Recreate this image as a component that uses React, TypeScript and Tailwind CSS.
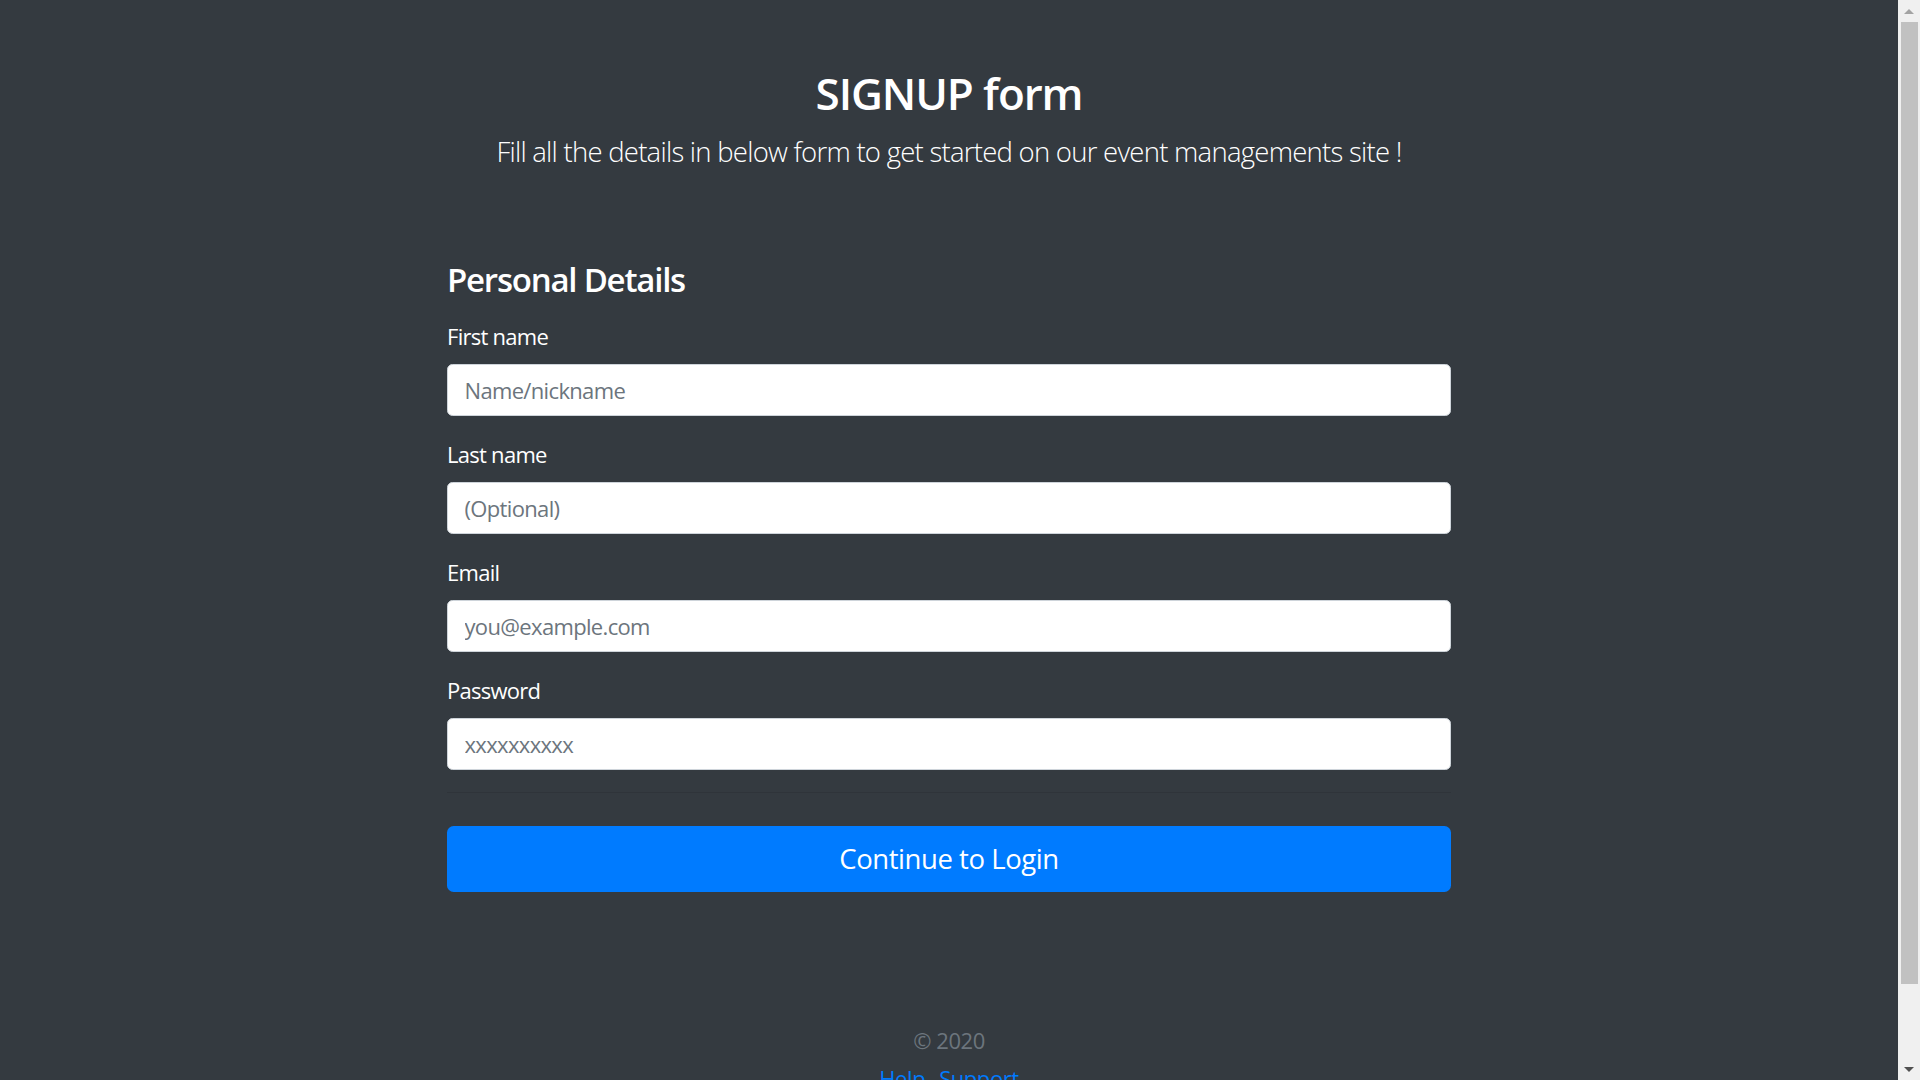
export default function App() {
  const fields = [
    { label: "First name", placeholder: "Name/nickname", type: "text" },
    { label: "Last name", placeholder: "(Optional)", type: "text" },
    { label: "Email", placeholder: "you@example.com", type: "email" },
    { label: "Password", placeholder: "xxxxxxxxxx", type: "password" },
  ];

  return (
    <div className="flex h-[1080px] overflow-hidden bg-[#343a40] font-['Open_Sans',sans-serif] text-white">
      <main className="min-w-0 flex-1">
        <div className="pt-[67px] pb-[66px] text-center">
          <h2 className="mb-[11px] text-[44px] font-semibold leading-[1.2] tracking-[-0.025em]">SIGNUP form</h2>
          <p className="mb-[22px] text-[27.5px] font-light leading-normal tracking-[-0.027em]">
            Fill all the details in below form to get started on our event managements site !
          </p>
        </div>

        <div className="mx-auto w-[1004px]">
          <h4 className="mb-[20px] text-[33px] font-semibold leading-[1.2] tracking-[-0.037em]">Personal Details</h4>
          <form onSubmit={(e) => e.preventDefault()}>
            {fields.map((f) => (
              <div key={f.label} className="mb-[22px]">
                <label className="mb-[11px] inline-block text-[22px] leading-normal tracking-[-0.033em]">{f.label}</label>
                <input
                  type={f.type === "password" ? "text" : f.type}
                  placeholder={f.placeholder}
                  className="block h-[52px] w-full rounded-[5.5px] border border-[#ced4da] bg-white px-[16.5px] text-[22px] tracking-[-0.03em] text-[#495057] placeholder:text-[#6c757d] outline-none"
                />
              </div>
            ))}
            <hr className="mb-[33px] border-t border-[#2f343a]" />
            <button
              type="submit"
              className="block h-[66px] w-full rounded-[6.6px] bg-[#007bff] text-[27.5px] leading-normal tracking-[-0.016em] text-white"
            >
              Continue to Login
            </button>
          </form>
        </div>

        <footer className="mt-[66px] pt-[66px] text-center text-[22px] leading-normal tracking-[-0.02em]">
          <p className="mb-[5.5px] text-[#6c757d]">© 2020</p>
          <ul className="flex justify-center gap-[14px] text-[#007bff]">
            <li>
              <a href="#">Help</a>
            </li>
            <li>
              <a href="#">Support</a>
            </li>
          </ul>
        </footer>
      </main>

      <div className="flex w-[22px] shrink-0 flex-col items-center bg-[#f0f0f0]">
        <div className="flex h-[22px] w-full items-center justify-center">
          <div className="h-0 w-0 border-x-[5px] border-b-[5px] border-x-transparent border-b-[#a3a3a3]" />
        </div>
        <div className="h-[962px] w-[17px] bg-[#c1c1c1]" />
        <div className="flex-1" />
        <div className="flex h-[22px] w-full items-center justify-center">
          <div className="h-0 w-0 border-x-[5px] border-t-[5px] border-x-transparent border-t-[#505050]" />
        </div>
      </div>
    </div>
  );
}
